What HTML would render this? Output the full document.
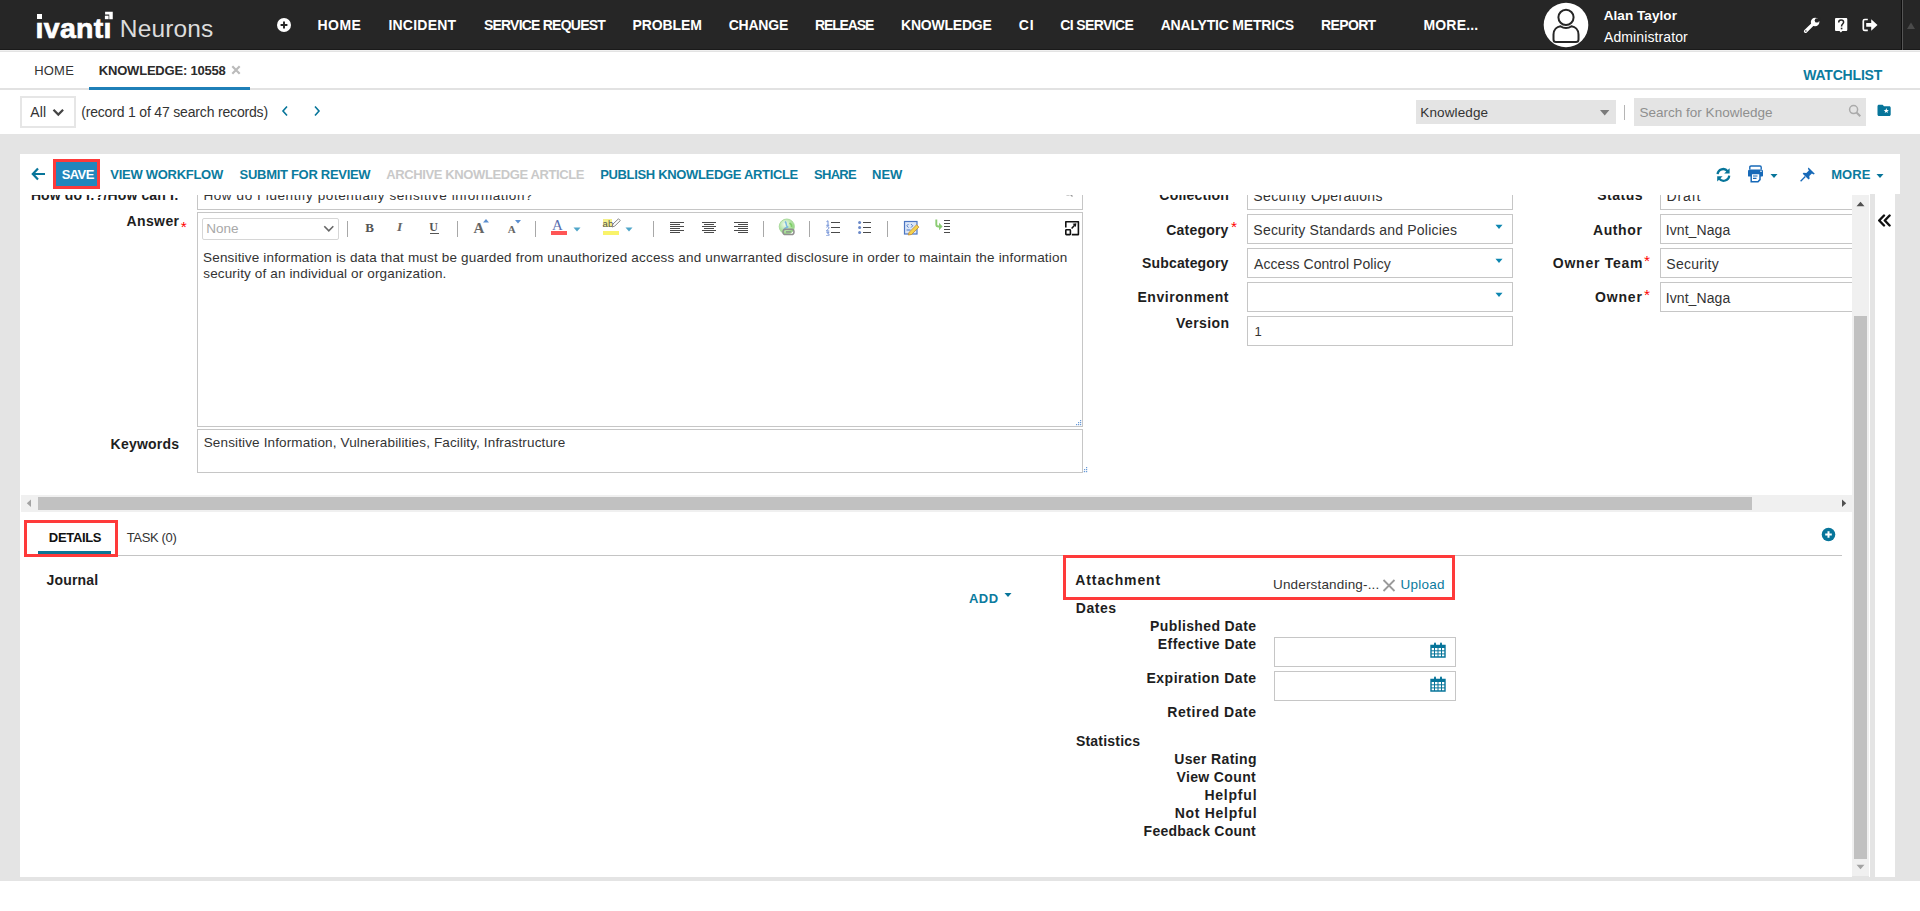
<!DOCTYPE html>
<html><head><meta charset="utf-8"><title>Knowledge 10558</title>
<style>
html,body{margin:0;padding:0;}
body{width:1920px;height:911px;overflow:hidden;position:relative;background:#fff;font-family:"Liberation Sans",sans-serif;}
.t{position:absolute;white-space:nowrap;line-height:1;}
.r{position:absolute;display:block;}
.clip{position:absolute;overflow:hidden;}
</style></head><body>
<div class="r" style="left:0px;top:0px;width:1920px;height:50px;background:#262626"></div>
<div class="r" style="left:0px;top:49px;width:1920px;height:1px;background:#1a1a1a"></div>
<div class="r" style="left:0px;top:50px;width:1920px;height:1px;background:#f0f0f0"></div>
<div class="r" style="left:0px;top:51px;width:1920px;height:1px;background:#e3e3e3"></div>
<div class="t" style="left:35.61px;top:13.62px;font-size:28.5px;color:#fff;font-weight:bold;letter-spacing:0.272px;-webkit-text-stroke:0.7px #fff;">ıvantı</div>
<div class="r" style="left:37.3px;top:14.1px;width:4.8px;height:4.8px;background:#fff"></div>
<svg class="r" style="left:104px;top:10px;" width="10" height="10" viewBox="0 0 10 10"><path d="M1.1 1.7H8.75V9.2H5.25V4.6H1.1Z" fill="#fff"/><rect x="0.9" y="5.7" width="3.7" height="3.5" fill="#fff"/></svg>
<div class="t" style="left:119.84px;top:16.86px;font-size:24.5px;color:#dcdcdc;letter-spacing:0.151px;">Neurons</div>
<svg class="r" style="left:276px;top:17px;" width="16" height="16" viewBox="0 0 16 16"><circle cx="8" cy="8" r="7" fill="#fff"/><path d="M8 4.6V11.4M4.6 8H11.4" stroke="#262626" stroke-width="1.9"/></svg>
<div class="t" style="left:317.59px;top:18.15px;font-size:14px;color:#fff;font-weight:bold;letter-spacing:0.433px;">HOME</div>
<div class="t" style="left:388.39px;top:18.15px;font-size:14px;color:#fff;font-weight:bold;letter-spacing:0.239px;">INCIDENT</div>
<div class="t" style="left:483.88px;top:18.15px;font-size:14px;color:#fff;font-weight:bold;letter-spacing:-0.774px;">SERVICE REQUEST</div>
<div class="t" style="left:632.39px;top:18.15px;font-size:14px;color:#fff;font-weight:bold;letter-spacing:-0.068px;">PROBLEM</div>
<div class="t" style="left:728.74px;top:18.15px;font-size:14px;color:#fff;font-weight:bold;letter-spacing:-0.234px;">CHANGE</div>
<div class="t" style="left:815.09px;top:18.15px;font-size:14px;color:#fff;font-weight:bold;letter-spacing:-1.163px;">RELEASE</div>
<div class="t" style="left:901.09px;top:18.15px;font-size:14px;color:#fff;font-weight:bold;letter-spacing:-0.230px;">KNOWLEDGE</div>
<div class="t" style="left:1018.74px;top:18.15px;font-size:14px;color:#fff;font-weight:bold;letter-spacing:0.940px;">CI</div>
<div class="t" style="left:1060.14px;top:18.15px;font-size:14px;color:#fff;font-weight:bold;letter-spacing:-0.606px;">CI SERVICE</div>
<div class="t" style="left:1160.65px;top:18.15px;font-size:14px;color:#fff;font-weight:bold;letter-spacing:-0.188px;">ANALYTIC METRICS</div>
<div class="t" style="left:1321.09px;top:18.15px;font-size:14px;color:#fff;font-weight:bold;letter-spacing:-0.652px;">REPORT</div>
<div class="t" style="left:1423.39px;top:18.15px;font-size:14px;color:#fff;font-weight:bold;letter-spacing:0.200px;">MORE...</div>
<svg class="r" style="left:1543px;top:2px;" width="46" height="46" viewBox="0 0 46 46"><circle cx="23" cy="23" r="22.3" fill="#fff"/><circle cx="23" cy="15.3" r="7.6" fill="none" stroke="#262626" stroke-width="2"/><path d="M10.5 37.5V32.5C10.5 27.5 14 24.8 17.5 24.2C19.5 25.6 21 26 23 26C25 26 26.5 25.6 28.5 24.2C32 24.8 35.5 27.5 35.5 32.5V37.5C35.5 39.3 34.5 40 33 40H13C11.5 40 10.5 39.3 10.5 37.5Z" fill="none" stroke="#262626" stroke-width="2"/></svg>
<div class="t" style="left:1603.66px;top:8.87px;font-size:13.5px;color:#fff;font-weight:bold;letter-spacing:0.078px;">Alan Taylor</div>
<div class="t" style="left:1604.00px;top:30.35px;font-size:14px;color:#fff;letter-spacing:0.104px;">Administrator</div>
<svg class="r" style="left:1803px;top:17px;" width="18" height="17" viewBox="0 0 18 17"><path d="M2.6 14.2L9.6 7.4" stroke="#fff" stroke-width="3.4" stroke-linecap="round"/><circle cx="2.9" cy="13.9" r="0.75" fill="#262626"/><circle cx="12.1" cy="5.0" r="4.3" fill="#fff"/><circle cx="13.9" cy="3.4" r="2.2" fill="#262626"/><path d="M13.9 3.4L17 0.4L17.5 4Z" fill="#262626"/></svg>
<svg class="r" style="left:1834px;top:17px;" width="15" height="17" viewBox="0 0 15 17"><path d="M2.3 1H12C12.8 1 13.3 1.5 13.3 2.3V12.7C13.3 13.5 12.8 14 12 14H8.3L6.9 15.4L5.5 14H2.3C1.5 14 1 13.5 1 12.7V2.3C1 1.5 1.5 1 2.3 1Z" fill="#fff"/><path d="M4.7 5.6C4.7 3.9 5.7 3.1 7.1 3.1C8.6 3.1 9.6 4 9.6 5.3C9.6 6.9 7.6 7.1 7.6 8.9V9.6" fill="none" stroke="#262626" stroke-width="1.5"/><rect x="6.8" y="10.7" width="1.6" height="1.6" fill="#262626"/></svg>
<svg class="r" style="left:1862px;top:18px;" width="17" height="14" viewBox="0 0 17 14"><path d="M5.8 1.5H2.8C1.9 1.5 1.3 2.1 1.3 3V10.9C1.3 11.8 1.9 12.4 2.8 12.4H5.8" fill="none" stroke="#fff" stroke-width="1.7"/><path d="M4.2 5H9.2V1.2L15.5 6.9L9.2 12.7V8.8H4.2Z" fill="#fff"/></svg>
<div class="r" style="left:1901px;top:0px;width:1px;height:50px;background:#0e0e0e"></div>
<div class="r" style="left:1902px;top:0px;width:1px;height:50px;background:#555"></div>
<svg class="r" style="left:1906px;top:21px;" width="10" height="9" viewBox="0 0 10 9"><path d="M1 8H9L5 1.5Z" fill="#4a4a4a"/></svg>
<div class="r" style="left:0px;top:88px;width:1920px;height:2px;background:#e2e2e2"></div>
<div class="r" style="left:89px;top:87px;width:161px;height:3px;background:#1f80b8"></div>
<div class="t" style="left:34.26px;top:64.30px;font-size:13px;color:#333;letter-spacing:0.187px;">HOME</div>
<div class="t" style="left:98.86px;top:64.30px;font-size:13px;color:#2b2b2b;font-weight:bold;letter-spacing:-0.211px;">KNOWLEDGE: 10558</div>
<svg class="r" style="left:231px;top:65px;" width="10" height="10" viewBox="0 0 10 10"><path d="M1.3 1.3L8.7 8.7M8.7 1.3L1.3 8.7" stroke="#bbb" stroke-width="2.2"/></svg>
<div class="t" style="left:1803.20px;top:68.15px;font-size:14px;color:#0b7b9e;font-weight:bold;letter-spacing:-0.188px;">WATCHLIST</div>
<div class="r" style="left:20px;top:96px;width:56px;height:32px;border:2px solid #e6e6e6;box-sizing:border-box;background:#fff"></div>
<div class="t" style="left:30.30px;top:105.15px;font-size:14px;color:#333;letter-spacing:0.185px;">All</div>
<svg class="r" style="left:52px;top:108px;" width="13" height="9" viewBox="0 0 13 9"><path d="M1.5 1.8L6.3 6.6L11.1 1.8" fill="none" stroke="#444" stroke-width="2.2"/></svg>
<div class="t" style="left:81.16px;top:105.15px;font-size:14px;color:#333;letter-spacing:-0.176px;">(record 1 of 47 search records)</div>
<svg class="r" style="left:281px;top:105px;" width="8" height="12" viewBox="0 0 8 12"><path d="M6 1.5L2 6L6 10.5" fill="none" stroke="#07759a" stroke-width="1.6"/></svg>
<svg class="r" style="left:313px;top:105px;" width="8" height="12" viewBox="0 0 8 12"><path d="M2 1.5L6 6L2 10.5" fill="none" stroke="#07759a" stroke-width="1.6"/></svg>
<div class="r" style="left:1416px;top:100px;width:200px;height:24px;background:#e4e4e4"></div>
<div class="t" style="left:1420.32px;top:105.57px;font-size:13.5px;color:#333;letter-spacing:0.116px;">Knowledge</div>
<svg class="r" style="left:1599px;top:109px;" width="12" height="8" viewBox="0 0 12 8"><path d="M1 1H10.4L5.7 6.6Z" fill="#7a7a7a"/></svg>
<div class="r" style="left:1624px;top:105px;width:1px;height:15px;background:#b5b5b5"></div>
<div class="r" style="left:1634px;top:98px;width:232px;height:28px;background:#e4e4e4"></div>
<div class="t" style="left:1639.39px;top:105.57px;font-size:13.5px;color:#8f8f8f;letter-spacing:0.020px;">Search for Knowledge</div>
<svg class="r" style="left:1848px;top:104px;" width="14" height="14" viewBox="0 0 14 14"><circle cx="5.6" cy="5.6" r="4" fill="none" stroke="#aaa" stroke-width="1.5"/><path d="M8.5 8.5L12.3 12.3" stroke="#aaa" stroke-width="2"/></svg>
<svg class="r" style="left:1876px;top:103px;" width="17" height="14" viewBox="0 0 17 14"><path d="M1.5 3.2C1.5 2.3 2.1 1.7 3 1.7H6.6L8 3.3H13.2C14.1 3.3 14.7 3.9 14.7 4.8V11.4C14.7 12.3 14.1 12.9 13.2 12.9H3C2.1 12.9 1.5 12.3 1.5 11.4Z" fill="#07759a"/><path d="M10.3 5.1L11 7L12.9 7.1L11.4 8.3L11.9 10.1L10.3 9.1L8.7 10.1L9.2 8.3L7.7 7.1L9.6 7Z" fill="#fff"/></svg>
<div class="r" style="left:0px;top:134px;width:1920px;height:747px;background:#e4e4e4"></div>
<div class="r" style="left:20px;top:154px;width:1880px;height:40px;background:#fff"></div>
<svg class="r" style="left:31px;top:166px;" width="16" height="16" viewBox="0 0 16 16"><path d="M7 2.5L1.8 8L7 13.5M2.2 8H14" fill="none" stroke="#07759a" stroke-width="2.2"/></svg>
<div class="r" style="left:53px;top:159px;width:47px;height:30px;background:#2286bc;border:3px solid #fe3a3a;box-sizing:border-box"></div>
<div class="t" style="left:61.71px;top:168.20px;font-size:13px;color:#fff;font-weight:bold;letter-spacing:-0.613px;">SAVE</div>
<div class="t" style="left:110.34px;top:168.20px;font-size:13px;color:#0b7b9e;font-weight:bold;letter-spacing:-0.285px;">VIEW WORKFLOW</div>
<div class="t" style="left:239.61px;top:168.20px;font-size:13px;color:#0b7b9e;font-weight:bold;letter-spacing:-0.300px;">SUBMIT FOR REVIEW</div>
<div class="t" style="left:386.28px;top:168.20px;font-size:13px;color:#c9c9c9;font-weight:bold;letter-spacing:-0.388px;">ARCHIVE KNOWLEDGE ARTICLE</div>
<div class="t" style="left:600.15px;top:168.20px;font-size:13px;color:#0b7b9e;font-weight:bold;letter-spacing:-0.331px;">PUBLISH KNOWLEDGE ARTICLE</div>
<div class="t" style="left:814.01px;top:168.20px;font-size:13px;color:#0b7b9e;font-weight:bold;letter-spacing:-0.714px;">SHARE</div>
<div class="t" style="left:872.05px;top:168.20px;font-size:13px;color:#0b7b9e;font-weight:bold;">NEW</div>
<div class="t" style="left:1831.15px;top:168.20px;font-size:13px;color:#0b7b9e;font-weight:bold;letter-spacing:0.100px;">MORE</div>
<svg class="r" style="left:1876px;top:173px;" width="8" height="6" viewBox="0 0 8 6"><path d="M0.5 1H7.5L4 5Z" fill="#07759a"/></svg>
<svg class="r" style="left:1715px;top:167px;" width="17" height="16" viewBox="0 0 17 16"><path d="M2.6 7.2A5.6 5.6 0 0 1 12.6 4.2" fill="none" stroke="#07759a" stroke-width="2.3"/><path d="M14.6 1.2V6.6H9.2Z" fill="#07759a"/><path d="M14.2 8.6A5.6 5.6 0 0 1 4.2 11.6" fill="none" stroke="#07759a" stroke-width="2.3"/><path d="M2.2 14.6V9.2H7.6Z" fill="#07759a"/></svg>
<svg class="r" style="left:1747px;top:165px;" width="18" height="18" viewBox="0 0 18 18"><path d="M2.8 4.4V2.2C2.8 1.5 3.3 1 4 1H13C13.7 1 14.2 1.5 14.2 2.2V4.4" fill="none" stroke="#1769b8" stroke-width="1.4"/><path d="M1 6.2C1 5 1.8 4.4 3 4.4H14C15.2 4.4 16 5 16 6.2V10.5C16 11.2 15.5 11.6 14.8 11.6H1.8C1.3 11.6 1 11.2 1 10.7Z" fill="#1769b8"/><circle cx="14" cy="6.3" r="0.8" fill="#fff"/><path d="M4.2 8.6H13V14.6L11 16.8H4.2Z" fill="#fff" stroke="#1769b8" stroke-width="1.5"/><path d="M6 11H10.5M6 13.4H9.5" stroke="#1769b8" stroke-width="1.1"/></svg>
<svg class="r" style="left:1770px;top:173px;" width="8" height="6" viewBox="0 0 8 6"><path d="M0.5 1H7.5L4 5Z" fill="#07759a"/></svg>
<svg class="r" style="left:1799px;top:166px;" width="18" height="16" viewBox="0 0 18 16"><path d="M9.5 1.5L15.8 7.8L14.6 8.4L12.9 7.4L10.3 10L10.6 12.8L9.6 13.6L3.7 7.7L4.5 6.7L7.3 7L9.9 4.4L8.9 2.7Z" fill="#1769b8"/><path d="M6.3 10.5L1.6 15.2" stroke="#1769b8" stroke-width="1.3"/></svg>
<div class="r" style="left:20px;top:194px;width:1832px;height:683px;background:#fff"></div>
<div class="clip" style="left:20px;top:195px;width:1832px;height:682px;"><div class="t" style="left:10.89px;top:-6.85px;font-size:14px;color:#1e1e1e;font-weight:bold;letter-spacing:0.113px;">How do I:?/How can I:</div><div class="r" style="left:177px;top:-15px;width:886px;height:30px;border:1px solid #c6c6c6;box-sizing:border-box"></div><div class="t" style="left:183.42px;top:-5.63px;font-size:13.5px;color:#333;letter-spacing:0.597px;">How do I identify potentially sensitive information?</div><svg class="r" style="left:1044px;top:-5px;" width="10" height="8" viewBox="0 0 10 8"><circle cx="4" cy="2" r="3" fill="none" stroke="#999" stroke-width="1.2"/><path d="M6 4L8.5 6.5" stroke="#999" stroke-width="1.3"/></svg><div class="t" style="left:106.45px;top:18.95px;font-size:14px;color:#1e1e1e;font-weight:bold;letter-spacing:0.410px;">Answer</div><div class="t" style="left:160.77px;top:23.88px;font-size:15.5px;color:#f00;">*</div><div class="r" style="left:177px;top:17px;width:886px;height:215px;border:1px solid #c6c6c6;box-sizing:border-box"></div><div class="r" style="left:182px;top:23px;width:137px;height:22px;border:1px solid #d6d6d6;border-radius:2px;box-sizing:border-box"></div><div class="t" style="left:186.32px;top:27.37px;font-size:13.5px;color:#a8a8a8;">None</div><svg class="r" style="left:303px;top:30px;" width="12" height="8" viewBox="0 0 12 8"><path d="M1.3 1.3L5.8 5.8L10.3 1.3" fill="none" stroke="#666" stroke-width="1.6"/></svg><div class="r" style="left:327px;top:26px;width:1px;height:16px;background:#a8a8a8"></div><div class="r" style="left:437px;top:26px;width:1px;height:16px;background:#a8a8a8"></div><div class="r" style="left:515px;top:26px;width:1px;height:16px;background:#a8a8a8"></div><div class="r" style="left:633px;top:26px;width:1px;height:16px;background:#a8a8a8"></div><div class="r" style="left:743px;top:26px;width:1px;height:16px;background:#a8a8a8"></div><div class="r" style="left:789px;top:26px;width:1px;height:16px;background:#a8a8a8"></div><div class="r" style="left:867px;top:26px;width:1px;height:16px;background:#a8a8a8"></div><div class="t" style="left:345.15px;top:25.80px;font-size:13px;color:#555;font-weight:bold;font-family:'Liberation Serif',serif;">B</div><div class="t" style="left:377.12px;top:25.37px;font-size:13.5px;color:#666;font-weight:bold;font-family:'Liberation Serif',serif;font-style:italic;">I</div><div class="t" style="left:409.28px;top:25.84px;font-size:12px;color:#555;font-weight:bold;font-family:'Liberation Serif',serif;">U</div><div class="r" style="left:410px;top:38px;width:9px;height:1px;background:#555"></div><div class="t" style="left:453.62px;top:25.70px;font-size:15px;color:#666;font-weight:bold;font-family:'Liberation Serif',serif;">A</div><svg class="r" style="left:463px;top:24px;" width="6" height="4" viewBox="0 0 6 4"><path d="M0 3.5H6L3 0Z" fill="#5b8fd0"/></svg><div class="t" style="left:487.73px;top:29.09px;font-size:11px;color:#666;font-weight:bold;font-family:'Liberation Serif',serif;">A</div><svg class="r" style="left:495px;top:25px;" width="6" height="4" viewBox="0 0 6 4"><path d="M0 0H6L3 3.5Z" fill="#5b8fd0"/></svg><div class="t" style="left:532.00px;top:22.60px;font-size:15px;color:#5a6fb0;font-family:'Liberation Serif',serif;">A</div><div class="r" style="left:531px;top:36px;width:16px;height:4px;background:#f55"></div><svg class="r" style="left:553px;top:32px;" width="8" height="5" viewBox="0 0 8 5"><path d="M0.5 0.5H7.5L4 4.5Z" fill="#4fa6c9"/></svg><div class="r" style="left:583px;top:24px;width:9px;height:8px;background:#f4f08a"></div><div class="t" style="left:582.62px;top:23.96px;font-size:9.5px;color:#555;">ab</div><svg class="r" style="left:590px;top:23px;" width="11" height="11" viewBox="0 0 11 11"><path d="M2 9L3 6L8.5 0.8L10.3 2.6L4.8 8Z" fill="#fff" stroke="#777" stroke-width="0.9"/></svg><div class="r" style="left:583px;top:36px;width:16px;height:4px;background:#f9f36a"></div><svg class="r" style="left:605px;top:32px;" width="8" height="5" viewBox="0 0 8 5"><path d="M0.5 0.5H7.5L4 4.5Z" fill="#4fa6c9"/></svg><svg class="r" style="left:650px;top:26px;" width="15" height="13" viewBox="0 0 15 13"><rect x="0" y="1" width="14" height="1" fill="#4a4a4a"/><rect x="0" y="3" width="10" height="1" fill="#4a4a4a"/><rect x="0" y="5" width="14" height="1" fill="#4a4a4a"/><rect x="0" y="7" width="10" height="1" fill="#4a4a4a"/><rect x="0" y="9" width="14" height="1" fill="#4a4a4a"/><rect x="0" y="11" width="10" height="1" fill="#4a4a4a"/></svg><svg class="r" style="left:682px;top:26px;" width="15" height="13" viewBox="0 0 15 13"><rect x="0" y="1" width="14" height="1" fill="#4a4a4a"/><rect x="2" y="3" width="10" height="1" fill="#4a4a4a"/><rect x="0" y="5" width="14" height="1" fill="#4a4a4a"/><rect x="2" y="7" width="10" height="1" fill="#4a4a4a"/><rect x="0" y="9" width="14" height="1" fill="#4a4a4a"/><rect x="2" y="11" width="10" height="1" fill="#4a4a4a"/></svg><svg class="r" style="left:714px;top:26px;" width="15" height="13" viewBox="0 0 15 13"><rect x="0" y="1" width="14" height="1" fill="#4a4a4a"/><rect x="4" y="3" width="10" height="1" fill="#4a4a4a"/><rect x="0" y="5" width="14" height="1" fill="#4a4a4a"/><rect x="4" y="7" width="10" height="1" fill="#4a4a4a"/><rect x="0" y="9" width="14" height="1" fill="#4a4a4a"/><rect x="4" y="11" width="10" height="1" fill="#4a4a4a"/></svg><svg class="r" style="left:758px;top:23px;" width="18" height="18" viewBox="0 0 18 18"><defs><radialGradient id="g1" cx="40%" cy="35%" r="65%"><stop offset="0" stop-color="#f2fbef"/><stop offset="1" stop-color="#8fd47c"/></radialGradient></defs><circle cx="8.8" cy="8.6" r="7.6" fill="url(#g1)" stroke="#a6d898" stroke-width="0.9"/><path d="M7 3.5C9 5 7.5 7.5 9.5 9C8 10 6.5 9.5 6 11.5" fill="none" stroke="#7ab8e0" stroke-width="1.6"/><path d="M11.5 5C13 6 14 7.5 13.5 9" fill="none" stroke="#7fcf6a" stroke-width="1.6"/><rect x="5" y="11.2" width="11" height="5.3" rx="2.6" fill="none" stroke="#8f8f8f" stroke-width="1.5"/><rect x="8" y="13.2" width="5" height="1.4" fill="#8f8f8f"/></svg><svg class="r" style="left:805px;top:24px;" width="16" height="17" viewBox="0 0 16 17"><g fill="none" stroke="#6f8fd6" stroke-width="1"><path d="M1.5 2.6L3 1.8V6.2M1.3 6.3H4.2"/><path d="M1.4 8.2C2.4 7.2 4.2 7.6 4 9C3.8 10 2 10.8 1.4 12H4.3"/><path d="M1.4 13.3H4L2.6 14.9C4 14.9 4.4 15.6 4.2 16.3C3.9 17 2.4 17 1.4 16.5"/></g><rect x="6" y="3" width="9" height="1" fill="#4a4a4a"/><rect x="6" y="8" width="9" height="1" fill="#4a4a4a"/><rect x="6" y="13" width="9" height="1" fill="#4a4a4a"/></svg><svg class="r" style="left:837px;top:24px;" width="16" height="17" viewBox="0 0 16 17"><circle cx="2.6" cy="3.5" r="1.5" fill="#6a88c8"/><circle cx="2.6" cy="8.5" r="1.5" fill="#6a88c8"/><circle cx="2.6" cy="13.5" r="1.5" fill="#6a88c8"/><rect x="6" y="3" width="8" height="1" fill="#4a4a4a"/><rect x="6" y="8" width="8" height="1" fill="#4a4a4a"/><rect x="6" y="13" width="8" height="1" fill="#4a4a4a"/></svg><svg class="r" style="left:883px;top:24px;" width="17" height="17" viewBox="0 0 17 17"><rect x="1.5" y="2.5" width="12.5" height="12.5" fill="#dbe6f7" stroke="#4c76c2" stroke-width="1.2"/><path d="M5.5 5L3.8 6.8L5.5 8.6M8 5L9.7 6.8L8 8.6" fill="none" stroke="#4c76c2" stroke-width="0.9"/><rect x="3.5" y="10.5" width="4" height="1" fill="#4c76c2"/><path d="M5.2 16L6.2 13.2L13.6 5.8L15.9 8.1L8.5 15.5Z" fill="#f4d24e" stroke="#c48a2e" stroke-width="0.8"/></svg><svg class="r" style="left:915px;top:24px;" width="16" height="15" viewBox="0 0 16 15"><path d="M1.3 0.5V5.5C1.3 6.6 2 7.5 3.3 7.5H4.3" fill="none" stroke="#8ccc74" stroke-width="1.9"/><path d="M4 3.8L7.6 7.5L4 11.3Z" fill="#8ccc74"/><rect x="9" y="1" width="6" height="1" fill="#4a4a4a"/><rect x="9" y="4" width="6" height="1" fill="#4a4a4a"/><rect x="9" y="7" width="6" height="1" fill="#4a4a4a"/><rect x="9" y="10" width="6" height="1" fill="#4a4a4a"/><rect x="9" y="13" width="6" height="1" fill="#4a4a4a"/></svg><svg class="r" style="left:1043px;top:25px;" width="17" height="17" viewBox="0 0 17 17"><path d="M2.8 7.6V1.8H15.4V14.6H8.8" fill="none" stroke="#111" stroke-width="1.6" stroke-linejoin="round"/><rect x="2.8" y="9.8" width="4.6" height="4.8" rx="0.6" fill="none" stroke="#111" stroke-width="1.6"/><path d="M8.6 8.4L11.6 5.2" fill="none" stroke="#111" stroke-width="1.5"/><path d="M13.4 3.2L9.6 3.8L12.8 7Z" fill="#111"/></svg><div class="t" style="left:183.09px;top:56.27px;font-size:13.5px;color:#333;letter-spacing:0.171px;">Sensitive information is data that must be guarded from unauthorized access and unwarranted disclosure in order to maintain the information</div><div class="t" style="left:183.29px;top:72.37px;font-size:13.5px;color:#333;letter-spacing:0.144px;">security of an individual or organization.</div><svg class="r" style="left:1056px;top:225px;" width="6" height="6" viewBox="0 0 6 6"><g fill="#6a9ad6"><rect x="4" y="0" width="1.2" height="1.2"/><rect x="2" y="2" width="1.2" height="1.2"/><rect x="4" y="2" width="1.2" height="1.2"/><rect x="0" y="4" width="1.2" height="1.2"/><rect x="2" y="4" width="1.2" height="1.2"/><rect x="4" y="4" width="1.2" height="1.2"/></g></svg><svg class="r" style="left:1062px;top:272px;" width="6" height="6" viewBox="0 0 6 6"><g fill="#6a9ad6"><rect x="4" y="0" width="1.2" height="1.2"/><rect x="2" y="2" width="1.2" height="1.2"/><rect x="4" y="2" width="1.2" height="1.2"/><rect x="0" y="4" width="1.2" height="1.2"/><rect x="2" y="4" width="1.2" height="1.2"/><rect x="4" y="4" width="1.2" height="1.2"/></g></svg><div class="t" style="left:90.59px;top:241.95px;font-size:14px;color:#1e1e1e;font-weight:bold;letter-spacing:0.221px;">Keywords</div><div class="r" style="left:177px;top:234px;width:886px;height:44px;border:1px solid #c6c6c6;box-sizing:border-box"></div><div class="t" style="left:183.69px;top:240.87px;font-size:13.5px;color:#333;letter-spacing:0.141px;">Sensitive Information, Vulnerabilities, Facility, Infrastructure</div><div class="t" style="left:1139.34px;top:-6.85px;font-size:14px;color:#1e1e1e;font-weight:bold;letter-spacing:0.201px;">Collection</div><div class="r" style="left:1227px;top:-15px;width:266px;height:30px;border:1px solid #c6c6c6;box-sizing:border-box"></div><div class="t" style="left:1233.37px;top:-5.85px;font-size:14px;color:#333;letter-spacing:0.344px;">Security Operations</div><div class="t" style="left:1146.24px;top:27.75px;font-size:14px;color:#1e1e1e;font-weight:bold;letter-spacing:0.206px;">Category</div><div class="t" style="left:1210.97px;top:23.88px;font-size:15.5px;color:#f00;">*</div><div class="r" style="left:1227px;top:19px;width:266px;height:30px;border:1px solid #c6c6c6;box-sizing:border-box"></div><div class="t" style="left:1233.37px;top:28.45px;font-size:14px;color:#333;letter-spacing:0.198px;">Security Standards and Policies</div><svg class="r" style="left:1475px;top:29px;" width="8" height="6" viewBox="0 0 8 6"><path d="M0.5 0.8H7.5L4 5Z" fill="#0e86b0"/></svg><div class="t" style="left:1122.08px;top:61.35px;font-size:14px;color:#1e1e1e;font-weight:bold;letter-spacing:0.152px;">Subcategory</div><div class="r" style="left:1227px;top:53px;width:266px;height:30px;border:1px solid #c6c6c6;box-sizing:border-box"></div><div class="t" style="left:1234.00px;top:62.35px;font-size:14px;color:#333;letter-spacing:0.066px;">Access Control Policy</div><svg class="r" style="left:1475px;top:63px;" width="8" height="6" viewBox="0 0 8 6"><path d="M0.5 0.8H7.5L4 5Z" fill="#0e86b0"/></svg><div class="t" style="left:1117.49px;top:95.15px;font-size:14px;color:#1e1e1e;font-weight:bold;letter-spacing:0.541px;">Environment</div><div class="r" style="left:1227px;top:87px;width:266px;height:30px;border:1px solid #c6c6c6;box-sizing:border-box"></div><svg class="r" style="left:1475px;top:97px;" width="8" height="6" viewBox="0 0 8 6"><path d="M0.5 0.8H7.5L4 5Z" fill="#0e86b0"/></svg><div class="t" style="left:1155.93px;top:121.15px;font-size:14px;color:#1e1e1e;font-weight:bold;letter-spacing:0.445px;">Version</div><div class="r" style="left:1227px;top:121px;width:266px;height:30px;border:1px solid #c6c6c6;box-sizing:border-box"></div><div class="t" style="left:1234.53px;top:129.50px;font-size:13px;color:#333;">1</div><div class="t" style="left:1577.28px;top:-7.15px;font-size:14px;color:#1e1e1e;font-weight:bold;letter-spacing:0.502px;">Status</div><div class="r" style="left:1640px;top:-15px;width:250px;height:30px;border:1px solid #c6c6c6;box-sizing:border-box"></div><div class="t" style="left:1646.38px;top:-5.85px;font-size:14px;color:#333;letter-spacing:0.920px;">Draft</div><div class="t" style="left:1572.95px;top:27.75px;font-size:14px;color:#1e1e1e;font-weight:bold;letter-spacing:0.608px;">Author</div><div class="r" style="left:1640px;top:19px;width:250px;height:30px;border:1px solid #c6c6c6;box-sizing:border-box"></div><div class="t" style="left:1645.74px;top:28.45px;font-size:14px;color:#333;letter-spacing:0.078px;">Ivnt_Naga</div><div class="t" style="left:1532.84px;top:61.35px;font-size:14px;color:#1e1e1e;font-weight:bold;letter-spacing:0.742px;">Owner Team</div><div class="t" style="left:1624.07px;top:57.88px;font-size:15.5px;color:#f00;">*</div><div class="r" style="left:1640px;top:53px;width:250px;height:30px;border:1px solid #c6c6c6;box-sizing:border-box"></div><div class="t" style="left:1646.37px;top:62.35px;font-size:14px;color:#333;letter-spacing:0.256px;">Security</div><div class="t" style="left:1575.04px;top:95.15px;font-size:14px;color:#1e1e1e;font-weight:bold;letter-spacing:0.815px;">Owner</div><div class="t" style="left:1624.07px;top:91.88px;font-size:15.5px;color:#f00;">*</div><div class="r" style="left:1640px;top:87px;width:250px;height:30px;border:1px solid #c6c6c6;box-sizing:border-box"></div><div class="t" style="left:1645.74px;top:96.15px;font-size:14px;color:#333;letter-spacing:0.078px;">Ivnt_Naga</div><div class="r" style="left:1px;top:300px;width:1831px;height:17px;background:#f0f0f0"></div><div class="r" style="left:18px;top:302px;width:1714px;height:13px;background:#c1c1c1"></div><svg class="r" style="left:6px;top:304px;" width="6" height="9" viewBox="0 0 6 9"><path d="M5 0.5V8L0.8 4.2Z" fill="#a3a3a3"/></svg><svg class="r" style="left:1821px;top:304px;" width="6" height="9" viewBox="0 0 6 9"><path d="M1 0.5V8L5.2 4.2Z" fill="#505050"/></svg><div class="r" style="left:4px;top:360px;width:1818px;height:1px;background:#c4c4c4"></div><div class="r" style="left:18px;top:356px;width:73px;height:4px;background:#0b7595"></div><div class="r" style="left:4px;top:325px;width:94px;height:37px;border:3px solid #fe3a3a;box-sizing:border-box"></div><div class="t" style="left:28.86px;top:335.80px;font-size:13px;color:#111;font-weight:bold;letter-spacing:-0.333px;">DETAILS</div><div class="t" style="left:106.74px;top:335.80px;font-size:13px;color:#333;letter-spacing:-0.345px;">TASK (0)</div><svg class="r" style="left:1801px;top:332px;" width="15" height="15" viewBox="0 0 15 15"><circle cx="7.5" cy="7.5" r="6.8" fill="#07759a"/><path d="M7.5 4.2V10.8M4.2 7.5H10.8" stroke="#fff" stroke-width="2"/></svg><div class="t" style="left:26.49px;top:378.15px;font-size:14px;color:#1e1e1e;font-weight:bold;letter-spacing:0.197px;">Journal</div><div class="t" style="left:949.07px;top:396.50px;font-size:13px;color:#0b7b9e;font-weight:bold;letter-spacing:0.400px;">ADD</div><svg class="r" style="left:984px;top:397px;" width="8" height="6" viewBox="0 0 8 6"><path d="M0.5 1H7.5L4 5Z" fill="#07759a"/></svg><div class="r" style="left:1043px;top:360px;width:392px;height:45px;border:3px solid #fe3a3a;box-sizing:border-box"></div><div class="t" style="left:1055.35px;top:377.95px;font-size:14px;color:#1e1e1e;font-weight:bold;letter-spacing:0.866px;">Attachment</div><div class="t" style="left:1252.99px;top:383.27px;font-size:13.5px;color:#333;letter-spacing:0.168px;">Understanding-...</div><svg class="r" style="left:1362px;top:384px;" width="14" height="13" viewBox="0 0 14 13"><path d="M1.5 1L12.5 12M12.5 1L1.5 12" stroke="#9a9a9a" stroke-width="1.8"/></svg><div class="t" style="left:1380.59px;top:383.27px;font-size:13.5px;color:#0b7b9e;letter-spacing:0.239px;">Upload</div><div class="t" style="left:1055.69px;top:406.15px;font-size:14px;color:#1e1e1e;font-weight:bold;letter-spacing:0.580px;">Dates</div><div class="t" style="left:1130.09px;top:424.15px;font-size:14px;color:#1e1e1e;font-weight:bold;letter-spacing:0.373px;">Published Date</div><div class="t" style="left:1137.79px;top:442.45px;font-size:14px;color:#1e1e1e;font-weight:bold;letter-spacing:0.438px;">Effective Date</div><div class="t" style="left:1126.49px;top:475.95px;font-size:14px;color:#1e1e1e;font-weight:bold;letter-spacing:0.494px;">Expiration Date</div><div class="t" style="left:1147.29px;top:510.05px;font-size:14px;color:#1e1e1e;font-weight:bold;letter-spacing:0.576px;">Retired Date</div><div class="t" style="left:1154.16px;top:557.15px;font-size:14px;color:#1e1e1e;font-weight:bold;letter-spacing:0.381px;">User Rating</div><div class="t" style="left:1156.53px;top:575.15px;font-size:14px;color:#1e1e1e;font-weight:bold;letter-spacing:0.362px;">View Count</div><div class="t" style="left:1184.39px;top:593.15px;font-size:14px;color:#1e1e1e;font-weight:bold;letter-spacing:0.788px;">Helpful</div><div class="t" style="left:1154.69px;top:610.85px;font-size:14px;color:#1e1e1e;font-weight:bold;letter-spacing:0.720px;">Not Helpful</div><div class="t" style="left:1123.59px;top:628.55px;font-size:14px;color:#1e1e1e;font-weight:bold;letter-spacing:0.254px;">Feedback Count</div><div class="t" style="left:1055.88px;top:538.75px;font-size:14px;color:#1e1e1e;font-weight:bold;letter-spacing:0.217px;">Statistics</div><div class="r" style="left:1254px;top:442px;width:182px;height:30px;border:1px solid #c6c6c6;box-sizing:border-box"></div><svg class="r" style="left:1410px;top:447px;" width="16" height="16" viewBox="0 0 16 16"><path d="M1 3.5H15V15H1Z" fill="none" stroke="#07759a" stroke-width="1.4"/><rect x="1" y="3" width="14" height="3" fill="#07759a"/><rect x="4" y="0.5" width="2" height="4" rx="1" fill="#07759a"/><rect x="10" y="0.5" width="2" height="4" rx="1" fill="#07759a"/><path d="M4.5 6V15M8 6V15M11.5 6V15M1 8.8H15M1 11.9H15" stroke="#07759a" stroke-width="1"/></svg><div class="r" style="left:1254px;top:476px;width:182px;height:30px;border:1px solid #c6c6c6;box-sizing:border-box"></div><svg class="r" style="left:1410px;top:481px;" width="16" height="16" viewBox="0 0 16 16"><path d="M1 3.5H15V15H1Z" fill="none" stroke="#07759a" stroke-width="1.4"/><rect x="1" y="3" width="14" height="3" fill="#07759a"/><rect x="4" y="0.5" width="2" height="4" rx="1" fill="#07759a"/><rect x="10" y="0.5" width="2" height="4" rx="1" fill="#07759a"/><path d="M4.5 6V15M8 6V15M11.5 6V15M1 8.8H15M1 11.9H15" stroke="#07759a" stroke-width="1"/></svg></div>
<div class="r" style="left:1852px;top:195px;width:17px;height:681px;background:#f0f0f0"></div>
<div class="r" style="left:1854px;top:316px;width:13px;height:543px;background:#c1c1c1"></div>
<svg class="r" style="left:1856px;top:201px;" width="9" height="6" viewBox="0 0 9 6"><path d="M0.5 5.2H8.5L4.5 0.8Z" fill="#505050"/></svg>
<svg class="r" style="left:1856px;top:864px;" width="9" height="6" viewBox="0 0 9 6"><path d="M0.5 0.8H8.5L4.5 5.2Z" fill="#a3a3a3"/></svg>
<div class="r" style="left:1852px;top:194px;width:18px;height:1px;background:#fff"></div>
<div class="r" style="left:1869px;top:194px;width:1px;height:683px;background:#fff"></div>
<div class="r" style="left:1875px;top:194px;width:20px;height:683px;background:#fff"></div>
<svg class="r" style="left:1877px;top:214px;" width="15" height="14" viewBox="0 0 15 14"><path d="M7 1.5L2.2 6.5L7 11.5M12.6 1.5L7.8 6.5L12.6 11.5" fill="none" stroke="#111" stroke-width="2.4" stroke-linecap="round" stroke-linejoin="round"/></svg>
</body></html>
